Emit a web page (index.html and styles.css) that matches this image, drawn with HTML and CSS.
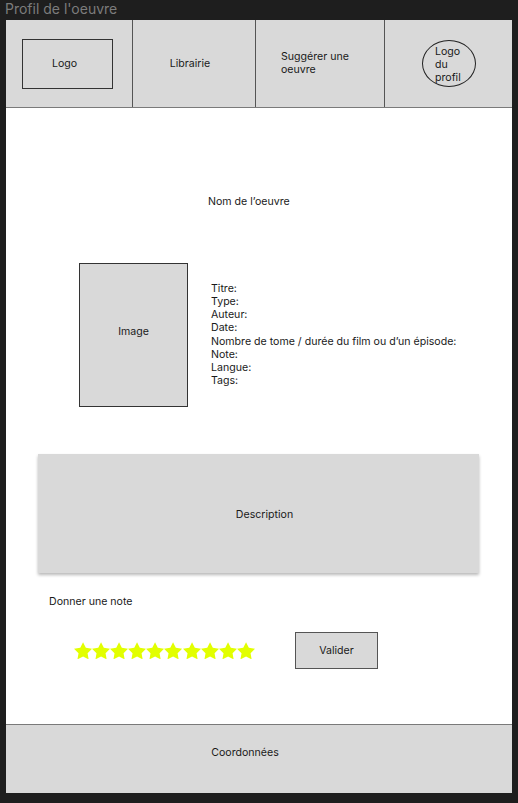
FILE: index.html
```html
<!DOCTYPE html>
<html lang="fr">
<head>
<meta charset="utf-8">
<title>Profil de l'oeuvre</title>
<link rel="stylesheet" href="styles.css">
</head>
<body>
<div class="title">Profil de l'oeuvre</div>
<div class="frame">
  <header class="header">
    <div class="cell cell-logo"><div class="logo-box">Logo</div></div>
    <div class="cell cell-lib">Librairie</div>
    <div class="cell cell-suggest">Suggérer une<br>oeuvre</div>
    <div class="cell cell-profile"><div class="profile-circle">Logo<br>du<br>profil</div></div>
  </header>
  <main class="main">
    <div class="work-name">Nom de l’oeuvre</div>
    <div class="info-row">
      <div class="image-box">Image</div>
      <div class="info">
        <div>Titre:</div>
        <div>Type:</div>
        <div>Auteur:</div>
        <div>Date:</div>
        <div>Nombre de tome / durée du film ou d’un épisode:</div>
        <div>Note:</div>
        <div>Langue:</div>
        <div>Tags:</div>
      </div>
    </div>
    <div class="description">Description</div>
    <div class="rate-label">Donner une note</div>
    <div class="rate-row">
      <div class="stars">
        <svg class="star" viewBox="0 0 20 19"><polygon points="10,0 13.09,6.26 20,7.27 15,12.14 16.18,19.02 10,15.77 3.82,19.02 5,12.14 0,7.27 6.91,6.26"/></svg>
        <svg class="star" viewBox="0 0 20 19"><polygon points="10,0 13.09,6.26 20,7.27 15,12.14 16.18,19.02 10,15.77 3.82,19.02 5,12.14 0,7.27 6.91,6.26"/></svg>
        <svg class="star" viewBox="0 0 20 19"><polygon points="10,0 13.09,6.26 20,7.27 15,12.14 16.18,19.02 10,15.77 3.82,19.02 5,12.14 0,7.27 6.91,6.26"/></svg>
        <svg class="star" viewBox="0 0 20 19"><polygon points="10,0 13.09,6.26 20,7.27 15,12.14 16.18,19.02 10,15.77 3.82,19.02 5,12.14 0,7.27 6.91,6.26"/></svg>
        <svg class="star" viewBox="0 0 20 19"><polygon points="10,0 13.09,6.26 20,7.27 15,12.14 16.18,19.02 10,15.77 3.82,19.02 5,12.14 0,7.27 6.91,6.26"/></svg>
        <svg class="star" viewBox="0 0 20 19"><polygon points="10,0 13.09,6.26 20,7.27 15,12.14 16.18,19.02 10,15.77 3.82,19.02 5,12.14 0,7.27 6.91,6.26"/></svg>
        <svg class="star" viewBox="0 0 20 19"><polygon points="10,0 13.09,6.26 20,7.27 15,12.14 16.18,19.02 10,15.77 3.82,19.02 5,12.14 0,7.27 6.91,6.26"/></svg>
        <svg class="star" viewBox="0 0 20 19"><polygon points="10,0 13.09,6.26 20,7.27 15,12.14 16.18,19.02 10,15.77 3.82,19.02 5,12.14 0,7.27 6.91,6.26"/></svg>
        <svg class="star" viewBox="0 0 20 19"><polygon points="10,0 13.09,6.26 20,7.27 15,12.14 16.18,19.02 10,15.77 3.82,19.02 5,12.14 0,7.27 6.91,6.26"/></svg>
        <svg class="star" viewBox="0 0 20 19"><polygon points="10,0 13.09,6.26 20,7.27 15,12.14 16.18,19.02 10,15.77 3.82,19.02 5,12.14 0,7.27 6.91,6.26"/></svg>
      </div>
      <div class="validate">Valider</div>
    </div>
  </main>
  <footer class="footer">Coordonnées</footer>
</div>
</body>
</html>
```
FILE: styles.css
```css
* { box-sizing: border-box; }
html, body { margin: 0; padding: 0; }
body {
  background: #1e1e1e;
  width: 518px;
  height: 803px;
  font-family: Inter, "Noto Sans", sans-serif;
  font-size: 10.6px;
  color: #1a1a1a;
  overflow: hidden;
}
.title {
  height: 20px;
  padding-left: 5px;
  font-size: 14px;
  line-height: 18px;
  color: #7c7c7c;
}
.frame {
  margin-left: 6px;
  width: 506px;
  height: 773px;
  background: #fff;
  display: flex;
  flex-direction: column;
}
.header {
  height: 88px;
  background: #d9d9d9;
  border-bottom: 1px solid #7a7a7a;
  display: grid;
  grid-template-columns: 127px 123px 129px 127px;
}
.cell {
  display: flex;
  align-items: center;
  border-right: 1px solid #555;
}
.cell:last-child { border-right: none; }
.cell-logo { padding-left: 16px; }
.logo-box {
  width: 91px;
  height: 50px;
  border: 1px solid #333;
  display: flex;
  align-items: center;
  justify-content: center;
  padding-right: 6px;
  padding-bottom: 1px;
}
.cell-lib { justify-content: center; padding-right: 8px; padding-bottom: 1px; }
.cell-suggest { padding-left: 25px; line-height: 13px; padding-bottom: 2px; }
.cell-profile { padding-left: 37px; }
.profile-circle {
  width: 54px;
  height: 47px;
  border: 1px solid #222;
  border-radius: 50%;
  padding-left: 12px;
  padding-top: 2px;
  line-height: 13px;
  display: flex;
  align-items: center;
}
.main {
  flex: 1;
  display: flex;
  flex-direction: column;
}
.work-name {
  margin-top: 87px;
  padding-left: 202px;
  line-height: 14px;
}
.info-row {
  margin-top: 54px;
  margin-left: 73px;
  display: flex;
  align-items: flex-start;
  gap: 23px;
}
.image-box {
  width: 109px;
  height: 144px;
  background: #d9d9d9;
  border: 1px solid #333;
  display: flex;
  align-items: center;
  justify-content: center;
  padding-bottom: 7px;
}
.info {
  margin-top: 19px;
  line-height: 13.15px;
}
.description {
  margin-top: 47px;
  margin-left: 32px;
  width: 441px;
  height: 119px;
  background: #d9d9d9;
  box-shadow: 0 2px 3px rgba(0,0,0,0.28);
  display: flex;
  align-items: center;
  justify-content: center;
  padding-left: 12px;
  padding-top: 2px;
}
.rate-label {
  margin-top: 22px;
  padding-left: 43px;
  line-height: 14px;
}
.rate-row {
  margin-top: 23px;
  display: flex;
  align-items: center;
  padding-left: 68px;
}
.stars {
  display: flex;
  width: 181px;
}
.star {
  width: 18.1px;
  height: 17.5px;
  fill: #e2ff00;
  flex: none;
}
.validate {
  margin-left: 40px;
  width: 83px;
  height: 37px;
  background: #d9d9d9;
  border: 1.5px solid #555;
  display: flex;
  align-items: center;
  justify-content: center;
}
.footer {
  height: 69px;
  background: #d9d9d9;
  border-top: 1px solid #7a7a7a;
  display: flex;
  align-items: center;
  justify-content: center;
  padding-right: 28px;
  padding-bottom: 14px;
}
```
